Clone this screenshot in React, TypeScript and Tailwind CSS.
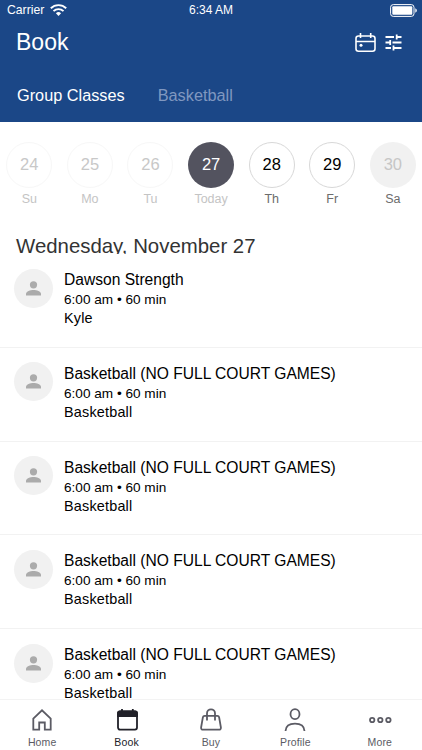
import type { ReactNode } from "react";

type Day = {
  date: number;
  label: string;
  state: "past" | "today" | "open" | "closed";
};

type ClassItem = {
  id: number;
  title: string;
  time: string;
  staff: string;
};

const days: Day[] = [
  { date: 24, label: "Su", state: "past" },
  { date: 25, label: "Mo", state: "past" },
  { date: 26, label: "Tu", state: "past" },
  { date: 27, label: "Today", state: "today" },
  { date: 28, label: "Th", state: "open" },
  { date: 29, label: "Fr", state: "open" },
  { date: 30, label: "Sa", state: "closed" },
];

const circleStyles = {
  past: "border border-[#f7f7f7] bg-white text-[#c8c8c8]",
  today: "bg-[#53535f] text-white",
  open: "border border-[#d8d8d8] bg-white text-black",
  closed: "bg-[#f1f1f1] text-[#c6c6c6]",
};

const labelStyles = {
  past: "text-[#c4c4c4]",
  today: "text-[#c4c4c4]",
  open: "text-[#6c6c6c]",
  closed: "text-[#6c6c6c]",
};

const basketball = "Basketball (NO FULL COURT GAMES)";

const classes: ClassItem[] = [
  { id: 1, title: "Dawson Strength", time: "6:00 am • 60 min", staff: "Kyle" },
  { id: 2, title: basketball, time: "6:00 am • 60 min", staff: "Basketball" },
  { id: 3, title: basketball, time: "6:00 am • 60 min", staff: "Basketball" },
  { id: 4, title: basketball, time: "6:00 am • 60 min", staff: "Basketball" },
  { id: 5, title: basketball, time: "6:00 am • 60 min", staff: "Basketball" },
];

export default function App() {
  return (
    <div className="flex h-[750px] w-[422px] flex-col overflow-hidden bg-white font-['Liberation_Sans',Arial,sans-serif]">
      <Header />
      <DayStrip />
      <h2 className="h-[19px] shrink-0 overflow-hidden pl-4 text-[20.4px] leading-[23px] whitespace-nowrap text-[#333]">
        Wednesday, November 27
      </h2>
      <main className="min-h-0 flex-1 overflow-hidden">
        {classes.map((item) => (
          <ClassRow key={item.id} item={item} />
        ))}
      </main>
      <TabBar />
    </div>
  );
}

function Header() {
  return (
    <header className="h-[122px] shrink-0 bg-[#1b4787] text-white">
      <div className="flex h-5 items-center justify-between pr-[5px] pl-[7px]">
        <div className="flex w-[119px] items-center gap-[6px]">
          <span className="text-[12.2px] leading-5">Carrier</span>
          <WifiIcon />
        </div>
        <span className="pb-px text-[12px] leading-[18px]">6:34 AM</span>
        <div className="flex w-[121px] justify-end">
          <BatteryIcon />
        </div>
      </div>
      <div className="flex h-[45px] items-center justify-between pr-[20px] pl-4">
        <h1 className="text-[23px] leading-[45px]">Book</h1>
        <div className="flex items-center gap-[9px]">
          <CalendarIcon />
          <FilterIcon />
        </div>
      </div>
      <nav className="flex gap-[33px] pt-[18px] pl-[17px] text-[16.3px] leading-6">
        <button>Group Classes</button>
        <button className="text-[#8098c0]">Basketball</button>
      </nav>
    </header>
  );
}

function DayStrip() {
  return (
    <section className="-ml-px flex h-[113px] w-[424px] shrink-0 pt-[19.5px]">
      {days.map((day) => (
        <div key={day.date} className="flex w-[60.6px] shrink-0 flex-col items-center">
          <div
            className={`grid size-[46px] place-items-center rounded-full text-[16.5px] ${circleStyles[day.state]}`}
          >
            {day.date}
          </div>
          <span
            className={`mt-[3px] text-[12.5px] leading-4 ${labelStyles[day.state]}`}
          >
            {day.label}
          </span>
        </div>
      ))}
    </section>
  );
}

function ClassRow({ item }: { item: ClassItem }) {
  return (
    <article className="flex h-[93.75px] border-b border-[#f2f2f2] pl-[13.5px]">
      <div className="mt-[14.5px] grid size-[39px] shrink-0 place-items-center rounded-full bg-[#f1f1f1]">
        <svg width="15" height="15" viewBox="0 0 15 15" fill="#ababab">
          <circle cx="7.5" cy="3.8" r="3.6" />
          <path d="M0 14.4v-1.6c0-2.7 4.4-3.9 7.5-3.9s7.5 1.2 7.5 3.9v1.6z" />
        </svg>
      </div>
      <div className="ml-[11.5px] pt-[16.2px] whitespace-nowrap text-black">
        <h3 className="text-[15.6px] leading-5">{item.title}</h3>
        <p className="text-[13.6px] leading-5">{item.time}</p>
        <p className="text-[14.4px] leading-[17px] tracking-[0.2px]">{item.staff}</p>
      </div>
    </article>
  );
}

function TabBar() {
  return (
    <nav className="grid h-[51px] shrink-0 grid-cols-5 border-t border-[#f3f3f3] bg-white">
      <Tab label="Home">
        <path d="M3.3 10.7 12 2.3l8.7 8.4v11h-5.9v-7.2H9.2v7.2H3.3z" />
      </Tab>
      <Tab label="Book" active>
        <path d="M7 1v3M17.8 1v3" />
        <rect x="3" y="3.4" width="19" height="18.2" rx="2" />
        <path d="M3 5.2C3 4 3.8 3.4 5 3.4h15c1.2 0 2 .6 2 1.8V8H3z" fill="currentColor" />
      </Tab>
      <Tab label="Buy">
        <path d="M5.6 7.8h12.8c1 0 1.5.5 1.700 1.400l1.800 10.300c.2 1.400-.6 2.200-1.900 2.200H4c-1.300 0-2.100-.8-1.900-2.200L3.900 9.200c.2-.9.7-1.400 1.700-1.400z" />
        <path d="M8 12.5V5.300a4 4 0 0 1 8 0v7.200" />
      </Tab>
      <Tab label="Profile">
        <ellipse cx="12" cy="6.2" rx="4.5" ry="5" />
        <path d="M2.5 23c.3-4.700 4-7.300 9.500-7.300s9.200 2.600 9.500 7.300" />
      </Tab>
      <Tab label="More">
        <circle cx="4.2" cy="12" r="2.2" />
        <circle cx="12.300" cy="12" r="2.2" />
        <circle cx="20.400" cy="12" r="2.2" />
      </Tab>
    </nav>
  );
}

function Tab({
  label,
  active = false,
  children,
}: {
  label: string;
  active?: boolean;
  children: ReactNode;
}) {
  return (
    <button
      className={`flex flex-col items-center pt-[7.5px] ${active ? "text-[#212129]" : "text-[#5b5b64]"}`}
    >
      <svg
        className="overflow-visible"
        width="24"
        height="24"
        viewBox="0 0 24 24"
        fill="none"
        stroke="currentColor"
        strokeWidth="1.8"
      >
        {children}
      </svg>
      <span className="mt-[4.5px] text-[10.5px] leading-[13px] tracking-[0.15px]">{label}</span>
    </button>
  );
}

function WifiIcon() {
  return (
    <svg width="17" height="12" viewBox="0 0 17 12" fill="none" stroke="white" strokeWidth="1.9">
      <path d="M.8 4.300a11 11 0 0 1 15.400 0M3.500 7.100a7.200 7.200 0 0 1 10 0" />
      <path d="M8.500 12 5.900 9.300a3.800 3.800 0 0 1 5.200 0z" fill="white" stroke="none" />
    </svg>
  );
}

function BatteryIcon() {
  return (
    <svg width="27" height="13" viewBox="0 0 27 13" fill="none">
      <rect x=".6" y=".6" width="23.4" height="11.8" rx="2.7" stroke="white" />
      <rect x="2.3" y="2.3" width="20" height="8.4" rx="1" fill="white" />
      <path d="M25.3 4.300c2 .8 2 3.600 0 4.400z" fill="white" />
    </svg>
  );
}

function CalendarIcon() {
  return (
    <svg width="21" height="19" viewBox="0 0 21 19" fill="none" stroke="white" strokeWidth="1.6">
      <rect x="1" y="3" width="19" height="15.2" rx="2.5" />
      <path d="M1 8.500h19M5.500 0v5M15.700 0v5" />
      <circle cx="6" cy="12.2" r="1.5" fill="white" stroke="none" />
    </svg>
  );
}

function FilterIcon() {
  return (
    <svg width="17" height="17" viewBox="0 0 17 17" fill="none" stroke="white" strokeWidth="1.8">
      <path d="M.5 3H9M11.500 3h5M.5 8.500H5M7.500 8.500h9M.5 14h5.500M8.500 14h8" />
      <path d="M11.700.5v5M5.200 6v5M8.500 11.500v5" />
    </svg>
  );
}
